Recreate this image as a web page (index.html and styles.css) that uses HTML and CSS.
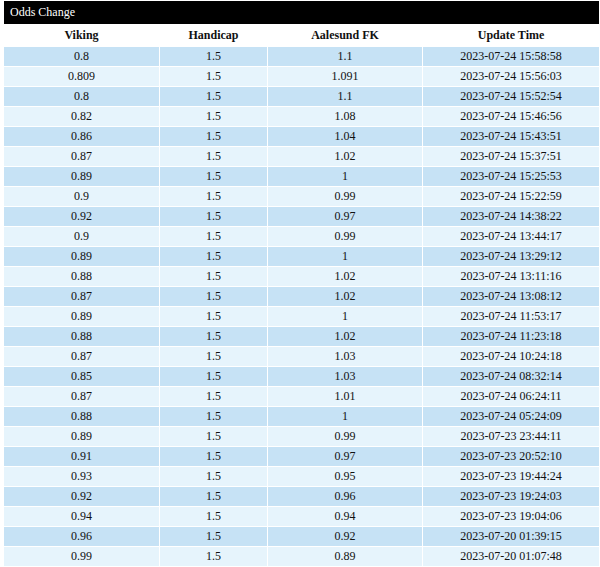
FILE: index.html
```html
<!DOCTYPE html>
<html>
<head>
<meta charset="utf-8">
<link rel="stylesheet" href="styles.css">
</head>
<body>
<div class="panel">
  <div class="title">Odds Change</div>
  <div class="row head"><div>Viking</div><div>Handicap</div><div>Aalesund FK</div><div>Update Time</div></div>
  <div class="row odd"><div>0.8</div><div>1.5</div><div>1.1</div><div>2023-07-24 15:58:58</div></div>
  <div class="row even"><div>0.809</div><div>1.5</div><div>1.091</div><div>2023-07-24 15:56:03</div></div>
  <div class="row odd"><div>0.8</div><div>1.5</div><div>1.1</div><div>2023-07-24 15:52:54</div></div>
  <div class="row even"><div>0.82</div><div>1.5</div><div>1.08</div><div>2023-07-24 15:46:56</div></div>
  <div class="row odd"><div>0.86</div><div>1.5</div><div>1.04</div><div>2023-07-24 15:43:51</div></div>
  <div class="row even"><div>0.87</div><div>1.5</div><div>1.02</div><div>2023-07-24 15:37:51</div></div>
  <div class="row odd"><div>0.89</div><div>1.5</div><div>1</div><div>2023-07-24 15:25:53</div></div>
  <div class="row even"><div>0.9</div><div>1.5</div><div>0.99</div><div>2023-07-24 15:22:59</div></div>
  <div class="row odd"><div>0.92</div><div>1.5</div><div>0.97</div><div>2023-07-24 14:38:22</div></div>
  <div class="row even"><div>0.9</div><div>1.5</div><div>0.99</div><div>2023-07-24 13:44:17</div></div>
  <div class="row odd"><div>0.89</div><div>1.5</div><div>1</div><div>2023-07-24 13:29:12</div></div>
  <div class="row even"><div>0.88</div><div>1.5</div><div>1.02</div><div>2023-07-24 13:11:16</div></div>
  <div class="row odd"><div>0.87</div><div>1.5</div><div>1.02</div><div>2023-07-24 13:08:12</div></div>
  <div class="row even"><div>0.89</div><div>1.5</div><div>1</div><div>2023-07-24 11:53:17</div></div>
  <div class="row odd"><div>0.88</div><div>1.5</div><div>1.02</div><div>2023-07-24 11:23:18</div></div>
  <div class="row even"><div>0.87</div><div>1.5</div><div>1.03</div><div>2023-07-24 10:24:18</div></div>
  <div class="row odd"><div>0.85</div><div>1.5</div><div>1.03</div><div>2023-07-24 08:32:14</div></div>
  <div class="row even"><div>0.87</div><div>1.5</div><div>1.01</div><div>2023-07-24 06:24:11</div></div>
  <div class="row odd"><div>0.88</div><div>1.5</div><div>1</div><div>2023-07-24 05:24:09</div></div>
  <div class="row even"><div>0.89</div><div>1.5</div><div>0.99</div><div>2023-07-23 23:44:11</div></div>
  <div class="row odd"><div>0.91</div><div>1.5</div><div>0.97</div><div>2023-07-23 20:52:10</div></div>
  <div class="row even"><div>0.93</div><div>1.5</div><div>0.95</div><div>2023-07-23 19:44:24</div></div>
  <div class="row odd"><div>0.92</div><div>1.5</div><div>0.96</div><div>2023-07-23 19:24:03</div></div>
  <div class="row even"><div>0.94</div><div>1.5</div><div>0.94</div><div>2023-07-23 19:04:06</div></div>
  <div class="row odd"><div>0.96</div><div>1.5</div><div>0.92</div><div>2023-07-20 01:39:15</div></div>
  <div class="row even"><div>0.99</div><div>1.5</div><div>0.89</div><div>2023-07-20 01:07:48</div></div>
</div>
</body>
</html>
```

FILE: styles.css
```css
html, body {
  margin: 0;
  padding: 0;
  background: #ffffff;
}
body {
  font-family: "Liberation Serif", "Times New Roman", serif;
  font-size: 12px;
  color: #111111;
}
.panel {
  margin: 1px 0 0 4px;
  width: 595px;
  display: flex;
  flex-direction: column;
  gap: 1px;
}
.title {
  height: 23px;
  line-height: 23px;
  background: #000000;
  color: #ffffff;
  padding-left: 6px;
  margin-bottom: -1px;
}
.row {
  display: grid;
  grid-template-columns: 155px 107px 154px 176px;
  column-gap: 1px;
}
.row > div {
  height: 19px;
  line-height: 19px;
  text-align: center;
}
.row.head > div {
  height: 22px;
  line-height: 23px;
  font-weight: bold;
  background: #ffffff;
}
.row.odd > div {
  background: #c6e2f5;
}
.row.even > div {
  background: #e6f4fc;
}
```
